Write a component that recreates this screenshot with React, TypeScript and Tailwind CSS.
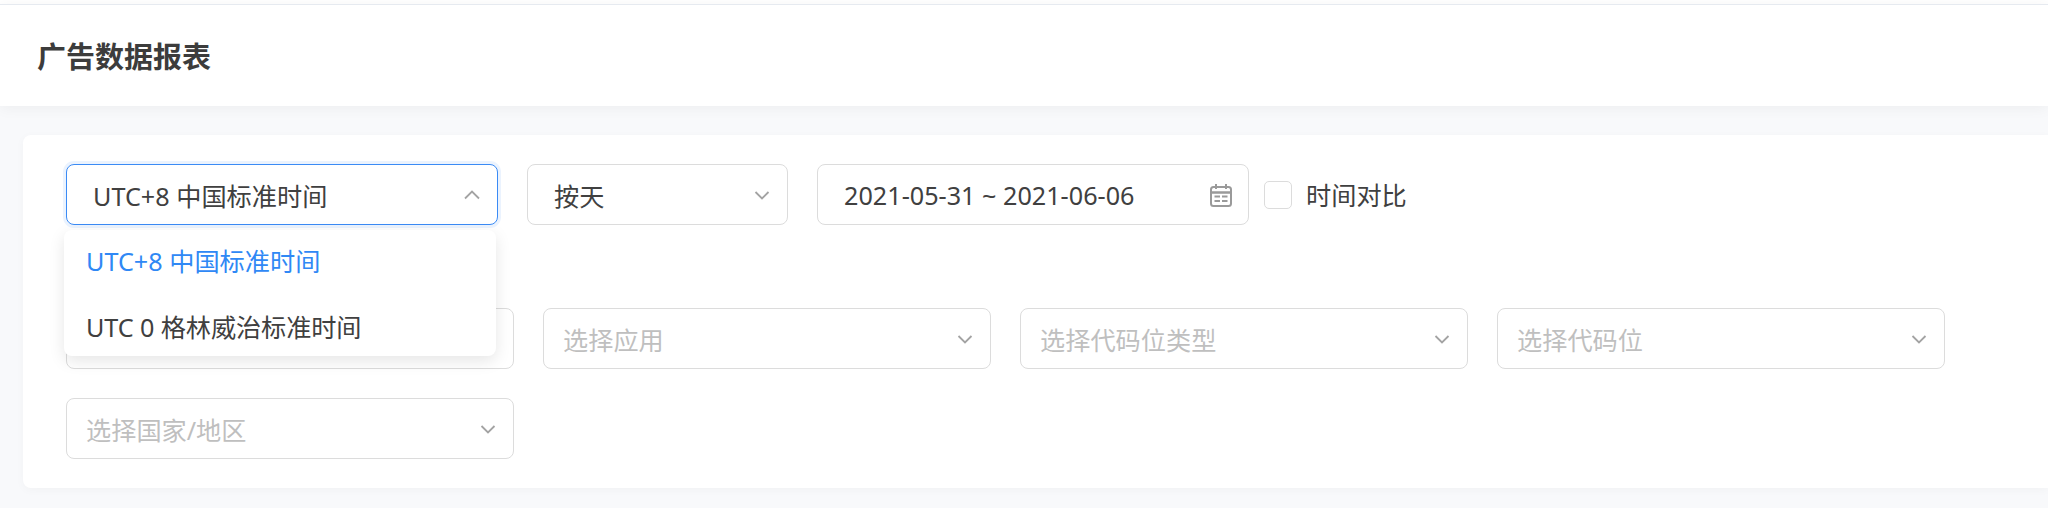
import React from "react";

const font = { fontFamily: '"Noto Sans", "Noto Sans CJK SC", sans-serif' };

function Chevron({ up = false }: { up?: boolean }) {
  return (
    <svg width="16" height="16" viewBox="0 0 16 16" fill="none" className="shrink-0">
      <path
        d={up ? "M1 11.5 L8 4.5 L15 11.5" : "M1.5 5 L8 11.5 L14.5 5"}
        stroke="#a3a3a3"
        strokeWidth="1.8"
      />
    </svg>
  );
}

function Calendar() {
  return (
    <svg width="22" height="24" viewBox="0 0 22 24" fill="none" className="shrink-0">
      <rect x="1" y="4" width="20" height="19" rx="2.5" stroke="#9a9a9a" strokeWidth="2" />
      <path d="M1 9.5 H21" stroke="#9a9a9a" strokeWidth="2.5" />
      <path d="M6 1 V6 M16 1 V6" stroke="#9a9a9a" strokeWidth="2" />
      <path d="M4.5 13.5 H10 M12 13.5 H17.5 M4.5 18 H10 M12 18 H17.5" stroke="#9a9a9a" strokeWidth="2" />
    </svg>
  );
}

function Select({ text, width = "w-[448px]", placeholder = true, pad = "pl-[19px]" }: { text: string; width?: string; placeholder?: boolean; pad?: string }) {
  return (
    <div
      className={`${width} ${pad} h-[61px] flex items-center justify-between pr-[17px] bg-white border border-[#dcdcdc] rounded-[8px] shrink-0`}
    >
      <span className={`pt-[2px] ${placeholder ? "text-[#bfbfbf]" : "text-[#404040]"}`}>{text}</span>
      <Chevron />
    </div>
  );
}

export default function App() {
  return (
    <div
      className="w-[2048px] h-[508px] overflow-hidden bg-[#f8f9fb] text-[25.2px] leading-[34px] text-[#404040]"
      style={font}
    >
      <div className="h-[4px] bg-white" />
      <header className="h-[102px] bg-white border-t border-[#e6eaf0] flex items-center pl-[37px] pt-[2px] shadow-[0_2px_14px_rgba(0,0,0,0.05)]">
        <h1 className="text-[29px] font-bold text-[#3c3c3c] leading-none">广告数据报表</h1>
      </header>

      <main className="ml-[23px] mt-[29px] h-[353px] bg-white rounded-l-[8px] pl-[43px] pt-[29px] shadow-[0_2px_10px_rgba(0,0,0,0.03)]">
        <div className="flex items-center mb-[83px]">
          <div className="relative mr-[29px]">
            <div className="w-[432px] h-[61px] flex items-center justify-between pl-[26px] pr-[17px] bg-white border border-[#3b8bf5] rounded-[8px] shadow-[0_0_0_3px_rgba(59,139,245,0.1)]">
              <span className="pt-[2px]">UTC+8 中国标准时间</span>
              <Chevron up />
            </div>
            <div className="absolute z-10 left-[-2px] top-[66px] w-[432px] h-[126px] bg-white rounded-[8px] shadow-[0_5px_16px_rgba(0,0,0,0.1)] flex flex-col justify-between pl-[22px] pt-[14px] pb-[12px]">
              <div className="text-[#2f88f5]">UTC+8 中国标准时间</div>
              <div className="tracking-[-0.1px]">UTC 0 格林威治标准时间</div>
            </div>
          </div>
          <div className="mr-[29px]">
            <Select text="按天" width="w-[261px]" placeholder={false} pad="pl-[26px]" />
          </div>
          <div className="w-[432px] h-[61px] flex items-center justify-between pl-[26px] pr-[16px] border border-[#dcdcdc] rounded-[8px] shrink-0">
            <span className="pt-[1px]">2021-05-31 ~ 2021-06-06</span>
            <Calendar />
          </div>
          <label className="flex items-center ml-[15px]">
            <span className="w-[28px] h-[28px] border border-[#dcdcdc] rounded-[5px] bg-white mr-[14px]" />
            <span className="pt-[1px]">时间对比</span>
          </label>
        </div>

        <div className="flex flex-wrap gap-[29px] w-[1900px]">
          <Select text="" />
          <Select text="选择应用" />
          <Select text="选择代码位类型" />
          <Select text="选择代码位" />
          <Select text="选择国家/地区" />
        </div>
      </main>
    </div>
  );
}
